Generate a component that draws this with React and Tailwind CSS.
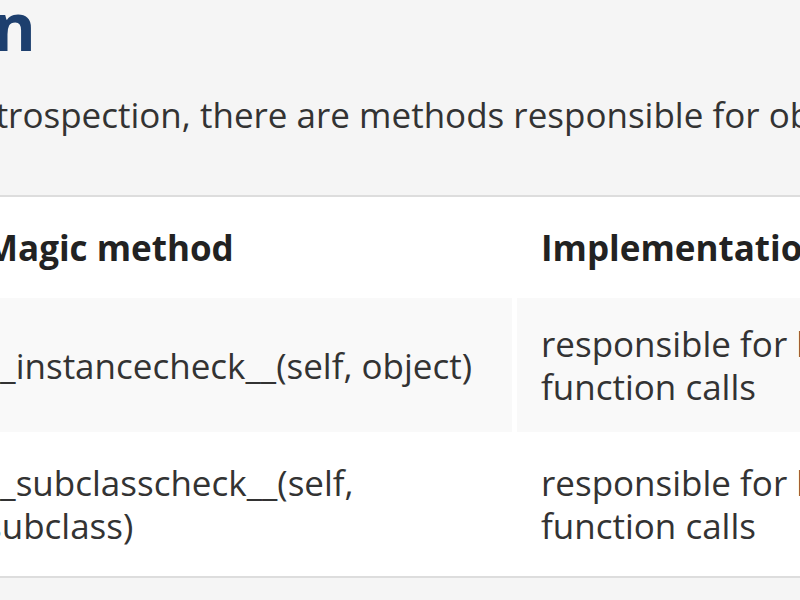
export default function App() {
  const rows = [
    {
      method: '__instancecheck__(self, object)',
      impl: 'responsible for built-in isinstance() function calls',
      bg: 'bg-[#f9f9f9]',
    },
    {
      method: '__subclasscheck__(self, subclass)',
      impl: 'responsible for built-in issubclass() function calls',
      bg: 'bg-white',
    },
  ];

  return (
    <div className="w-[800px] h-[600px] overflow-hidden bg-[#f5f5f5] font-['Open_Sans',sans-serif]">
      {/* heading, only its tail is in view */}
      <div className="flex w-[36px] justify-end -mt-[8px]">
        <h2 className="whitespace-nowrap text-[66px] leading-[66px] font-bold text-[#1d3f6e]">
          Introspection
        </h2>
      </div>

      <p className="-ml-[75px] mt-[35px] whitespace-nowrap text-[35px] leading-[43px] text-[#333]">
        In introspection, there are methods responsible for objects' type checking.
      </p>

      <div className="-ml-[44px] mt-[59px] w-max border-y-2 border-[#dddddd] bg-white">
        <table className="border-separate border-spacing-[5px] text-[35px] leading-[43px] text-[#333]">
          <thead>
            <tr>
              <th className="w-[551px] px-6 py-6 text-left font-bold text-[#222]">Magic method</th>
              <th className="w-[700px] px-6 py-6 text-left font-bold text-[#222]">Implementation</th>
            </tr>
          </thead>
          <tbody>
            {rows.map((r) => (
              <tr key={r.method}>
                <td className={`px-6 py-6 align-middle ${r.bg}`}>{r.method}</td>
                <td className={`px-6 py-6 align-middle ${r.bg}`}>{r.impl}</td>
              </tr>
            ))}
          </tbody>
        </table>
      </div>
    </div>
  );
}
